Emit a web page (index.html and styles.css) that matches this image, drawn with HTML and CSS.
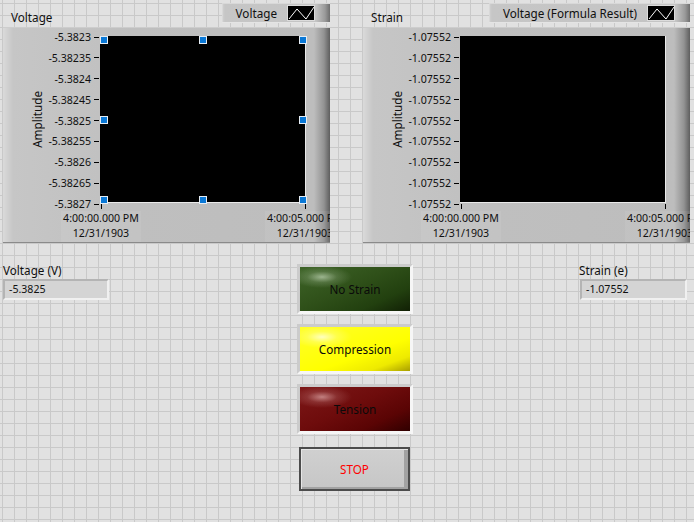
FILE: index.html
```html
<!DOCTYPE html>
<html>
<head>
<meta charset="utf-8">
<link rel="stylesheet" href="styles.css">
</head>
<body>
<div class="front">
  <div class="graphs">
    <section class="graph">
      <header class="graph-head">
        <span class="graph-title">Voltage</span>
        <div class="legend">
          <span class="legend-name">Voltage</span>
          <span class="legend-plot"><svg width="26" height="14" viewBox="0 0 26 14"><polyline points="1,13 9,3 18,13 26,1" fill="none" stroke="#fff" stroke-width="1"/></svg></span>
        </div>
      </header>
      <div class="graph-panel">
        <div class="yside">
          <div class="ytitle"><span>Amplitude</span></div>
          <div class="yscale">
            <span class="ytick">-5.3823</span>
            <span class="ytick">-5.38235</span>
            <span class="ytick">-5.3824</span>
            <span class="ytick">-5.38245</span>
            <span class="ytick">-5.3825</span>
            <span class="ytick">-5.38255</span>
            <span class="ytick">-5.3826</span>
            <span class="ytick">-5.38265</span>
            <span class="ytick">-5.3827</span>
          </div>
        </div>
        <div class="plot">
          <span class="handle h-tl"></span><span class="handle h-tc"></span><span class="handle h-tr"></span>
          <span class="handle h-ml"></span><span class="handle h-mr"></span>
          <span class="handle h-bl"></span><span class="handle h-bc"></span><span class="handle h-br"></span>
        </div>
        <div class="xscale">
          <div class="xlabel"><span>4:00:00.000 PM<br>12/31/1903</span></div>
          <div class="xlabel"><span>4:00:05.000 PM<br>12/31/1903</span></div>
        </div>
      </div>
    </section>
    <section class="graph">
      <header class="graph-head">
        <span class="graph-title">Strain</span>
        <div class="legend">
          <span class="legend-name">Voltage (Formula Result)</span>
          <span class="legend-plot"><svg width="26" height="14" viewBox="0 0 26 14"><polyline points="1,13 9,3 18,13 26,1" fill="none" stroke="#fff" stroke-width="1"/></svg></span>
        </div>
      </header>
      <div class="graph-panel">
        <div class="yside">
          <div class="ytitle"><span>Amplitude</span></div>
          <div class="yscale">
            <span class="ytick">-1.07552</span>
            <span class="ytick">-1.07552</span>
            <span class="ytick">-1.07552</span>
            <span class="ytick">-1.07552</span>
            <span class="ytick">-1.07552</span>
            <span class="ytick">-1.07552</span>
            <span class="ytick">-1.07552</span>
            <span class="ytick">-1.07552</span>
            <span class="ytick">-1.07552</span>
          </div>
        </div>
        <div class="plot"></div>
        <div class="xscale">
          <div class="xlabel"><span>4:00:00.000 PM<br>12/31/1903</span></div>
          <div class="xlabel"><span>4:00:05.000 PM<br>12/31/1903</span></div>
        </div>
      </div>
    </section>
  </div>

  <div class="controls">
    <div class="indicator ind-left">
      <div class="ind-label">Voltage (V)</div>
      <div class="numbox">-5.3825</div>
    </div>
    <div class="buttons">
      <div class="led led-green">No Strain</div>
      <div class="led led-yellow">Compression</div>
      <div class="led led-red">Tension</div>
      <div class="stop">STOP</div>
    </div>
    <div class="indicator ind-right">
      <div class="ind-label">Strain (e)</div>
      <div class="numbox">-1.07552</div>
    </div>
  </div>
</div>
</body>
</html>
```

FILE: styles.css
```css
html, body {
  margin: 0;
  padding: 0;
}
body {
  width: 694px;
  height: 522px;
  overflow: hidden;
  background-color: #e1e1e1;
  background-image:
    linear-gradient(to right, #c9c9c9 1px, transparent 1px),
    linear-gradient(to bottom, #c9c9c9 1px, transparent 1px);
  background-size: 12px 12px;
  background-position: 2px 3px;
  font-family: "Noto Sans", "DejaVu Sans", sans-serif;
  font-size: 11.7px;
  color: #101010;
}
.front {
  width: 694px;
  height: 522px;
}
.graphs {
  display: flex;
  padding-left: 3px;
  gap: 33px;
}
.graph {
  width: 327px;
  display: flex;
  flex-direction: column;
}
.graph-head {
  height: 27px;
  display: flex;
  justify-content: space-between;
  align-items: flex-start;
}
.graph-title {
  margin: 9px 0 0 8px;
  line-height: 16px;
}
.legend {
  margin-top: 3px;
  height: 20px;
  box-sizing: border-box;
  display: flex;
  align-items: center;
  padding-left: 14px;
  padding-right: 15px;
  gap: 10px;
  background: linear-gradient(to right, #d2d2d2 0, #c6c6c6 3px, #c4c4c4 calc(100% - 14px), #9a9a9a calc(100% - 5px), #6e6e6e 100%);
  box-shadow: inset 0 -1px 0 #e4e4e4, inset 1px 1px 0 #d8d8d8;
}
.legend-name {
  line-height: 16px;
}
.legend-plot {
  display: flex;
  width: 28px;
  height: 16px;
  box-sizing: border-box;
  border: 1px solid #dcdcdc;
  background: #000;
}
.graph-panel {
  height: 216px;
  display: grid;
  grid-template-columns: 97px 206px 1fr;
  grid-template-rows: 9px 167px 1fr;
  overflow: hidden;
  background: linear-gradient(to right, #dadada 0, #c6c6c6 10px, #bfbfbf 40%, #bdbdbd calc(100% - 16px), #929292 calc(100% - 6px), #5e5e5e 100%);
  box-shadow: inset 0 1px 0 #cdcdcd, inset 0 -1px 0 #8a8a8a;
}
.yside {
  grid-column: 1;
  grid-row: 2;
  display: flex;
}
.ytitle {
  width: 14px;
  margin-left: 27px;
  display: flex;
  align-items: center;
  justify-content: center;
}
.ytitle span {
  writing-mode: vertical-rl;
  transform: rotate(180deg);
  line-height: 14px;
  white-space: nowrap;
}
.yscale {
  flex: 1;
  display: flex;
  flex-direction: column;
  justify-content: space-between;
  margin: -6px 0 -8px 0;
}
.ytick {
  display: flex;
  align-items: center;
  justify-content: flex-end;
  height: 14px;
  line-height: 14px;
  font-size: 10.6px;
  white-space: nowrap;
}
.ytick::after {
  content: "";
  width: 5px;
  height: 1px;
  background: #000;
  margin-left: 3px;
  margin-right: 1px;
}
.plot {
  grid-column: 2;
  grid-row: 2;
  position: relative;
  background: #000;
  box-sizing: border-box;
  border-right: 1px solid #eaeaea;
  border-bottom: 1px solid #eaeaea;
}
.handle {
  position: absolute;
  width: 6px;
  height: 6px;
  background: #0a78d6;
  border: 1px solid #e6eef6;
}
.h-tl { left: 0; top: 0; }
.h-tc { left: 99px; top: 0; }
.h-tr { right: -2px; top: 0; }
.h-ml { left: 0; top: 80px; }
.h-mr { right: -2px; top: 80px; }
.h-bl { left: 0; bottom: -2px; }
.h-bc { left: 99px; bottom: -2px; }
.h-br { right: -2px; bottom: -2px; }
.xscale {
  grid-column: 2;
  grid-row: 3;
  display: flex;
  justify-content: space-between;
  margin: 0 -38px;
}
.xlabel {
  width: 78px;
  display: flex;
  flex-direction: column;
  align-items: center;
  font-size: 10.6px;
  line-height: 15px;
}
.xlabel::before {
  content: "";
  width: 1px;
  height: 5px;
  margin-top: 1px;
  background: #000;
}
.xlabel span {
  margin-top: 2px;
  white-space: nowrap;
  text-align: center;
  padding: 0 2px 1px;
  background: rgba(255, 255, 255, 0.07);
}
.controls {
  display: flex;
  align-items: flex-start;
}
.indicator {
  display: flex;
  flex-direction: column;
}
.ind-left {
  margin-left: 3px;
  width: 106px;
}
.ind-right {
  margin-left: 166px;
  width: 108px;
}
.ind-label {
  margin-top: 19px;
  line-height: 16px;
  white-space: nowrap;
}
.ind-right .numbox {
  margin-left: 1px;
}
.numbox {
  margin-top: 1px;
  height: 21px;
  box-sizing: border-box;
  border: 2px solid;
  border-color: #b4b4b4 #f0f0f0 #f0f0f0 #b4b4b4;
  background: #d4d4d4;
  padding-left: 4px;
  font-size: 10.6px;
  line-height: 17px;
}
.buttons {
  margin-left: 188px;
  margin-top: 21px;
  width: 116px;
  display: flex;
  flex-direction: column;
  gap: 10px;
}
.led {
  height: 50px;
  box-sizing: border-box;
  border: 3px solid;
  border-color: #cbcbcb #f6f6f6 #f6f6f6 #cbcbcb;
  display: flex;
  align-items: center;
  justify-content: center;
  font-size: 11.7px;
  color: #0a0a0a;
}
.led-green {
  background:
    radial-gradient(30px 11px at 22px 10px, rgba(200, 220, 190, 0.7), rgba(200, 220, 190, 0.2) 50%, rgba(200, 220, 190, 0)),
    linear-gradient(155deg, #3e6428 0%, #2f5019 45%, #22400f 75%, #112005 100%);
}
.led-yellow {
  background:
    radial-gradient(30px 11px at 22px 10px, rgba(255, 255, 220, 0.85), rgba(255, 255, 220, 0.25) 50%, rgba(255, 255, 220, 0)),
    linear-gradient(160deg, #ffff2a 0%, #ffff00 60%, #eeea00 82%, #a89e00 100%);
}
.led-red {
  background:
    radial-gradient(30px 11px at 22px 10px, rgba(220, 165, 165, 0.75), rgba(220, 165, 165, 0.2) 50%, rgba(220, 165, 165, 0)),
    linear-gradient(155deg, #7d1818 0%, #6e0c0c 45%, #5a0404 75%, #300000 100%);
}
.stop {
  margin-top: 3px;
  margin-left: 2px;
  width: 111px;
  height: 44px;
  box-sizing: border-box;
  border: 2px solid #4c4c4c;
  background: linear-gradient(to bottom, #d0d0d0 0%, #c6c6c6 100%);
  box-shadow: inset 1px 1px 0 #e6e6e6, inset -4px -2px 0 #a2a2a2;
  display: flex;
  align-items: center;
  justify-content: center;
  color: #ff0000;
  font-size: 11.7px;
}
```
